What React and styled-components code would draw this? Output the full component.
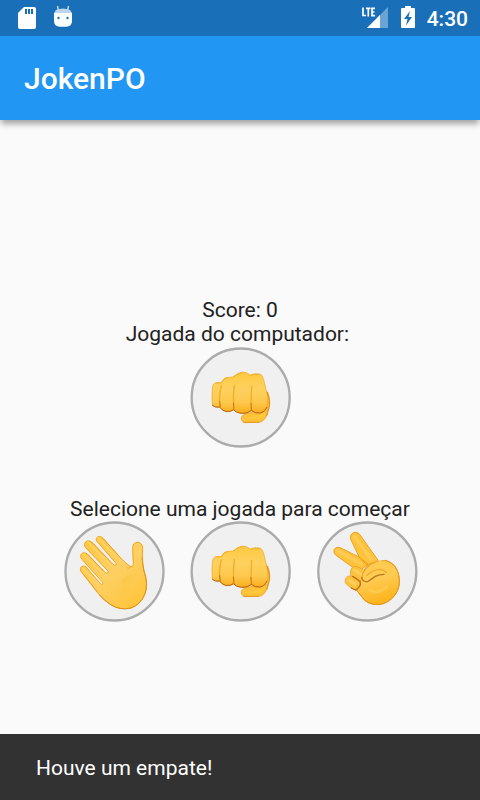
import React, { useState } from "react";
import styled, { createGlobalStyle } from "styled-components";

const GlobalStyle = createGlobalStyle`
  *, *::before, *::after { box-sizing: border-box; }
  body { margin: 0; background: #fafafa; }
`;

const Screen = styled.div`
  display: flex;
  flex-direction: column;
  min-height: 100vh;
  background: #fafafa;
  color: #212121;
  font-family: Roboto, "Liberation Sans", sans-serif;
  font-size: 21px;
  line-height: 24px;
`;

const StatusBar = styled.div`
  display: flex;
  align-items: center;
  justify-content: space-between;
  height: 36px;
  padding: 0 12px 0 15px;
  background: #1a70b8;
  color: #fff;
`;

const StatusGroup = styled.div`
  display: flex;
  align-items: center;
  gap: 12px;
`;

const StatusIcon = styled.svg`
  display: block;
  flex: none;
`;

const Clock = styled.time`
  padding-top: 2px;
  font-size: 21px;
  font-weight: 500;
`;

const AppBar = styled.header`
  display: flex;
  align-items: center;
  height: 84px;
  padding: 2px 24px 0;
  background: #2196f3;
  color: #fff;
  box-shadow: 0 5px 6px -1px rgba(0, 0, 0, 0.35);
`;

const Title = styled.h1`
  margin: 0;
  font-size: 30px;
  line-height: 36px;
  font-weight: 500;
`;

const Game = styled.main`
  flex: 1;
  display: flex;
  flex-direction: column;
  align-items: center;
  justify-content: center;
  gap: 49px;
`;

const Section = styled.section`
  display: flex;
  flex-direction: column;
  align-items: center;
`;

const Label = styled.p`
  margin: 0;
  white-space: pre;
`;

const Choices = styled.div`
  display: flex;
  gap: 25px;
  margin-top: -1px;
`;

const ChoiceButton = styled.button`
  display: block;
  padding: 0;
  border: 0;
  border-radius: 50%;
  background: none;
  cursor: pointer;
`;

const MoveArt = styled.svg`
  display: block;
  width: 102px;
  height: 102px;
  overflow: visible;
`;

const Snackbar = styled.div`
  position: fixed;
  right: 0;
  bottom: 0;
  left: 0;
  padding: 22px 36px 20px;
  background: #323232;
  color: #fff;
`;

function Disc({ cx }) {
  return <circle cx={cx} cy="169.5" r="147" fill="#f0f0f0" stroke="#ababab" strokeWidth="7" />;
}

function Paper() {
  return (
    <MoveArt viewBox="21 15 306 306" aria-hidden="true">
      <defs>
        <linearGradient id="paperSkin" x1="0" y1="0" x2="0.75" y2="1">
          <stop offset="0" stopColor="#ffc63a" />
          <stop offset="0.55" stopColor="#fdd064" />
          <stop offset="1" stopColor="#ffc53c" />
        </linearGradient>
      </defs>
      <Disc cx="178.5" />
      <path
        d="M77 168C73 156 83 149 93 156L137 207Q145 211 143 202L80 132C72 119 83 107 97 117L151 173Q161 178 159 168L92 98C82 85 96 70 111 82L173 147Q184 156 183 145L125 78C120 66 134 59 144 70L202 134Q223 155 231 155Q237 151 234 133L233 98C233 77 260 76 263 97L262 126Q263 150 267 168Q281 209 269 239Q256 269 228 279Q195 287 167 269Q142 253 129 235Z"
        fill="url(#paperSkin)"
        stroke="#f3a51b"
        strokeWidth="3"
        strokeLinejoin="round"
      />
      <path
        d="M199 196Q216 174 250 181Q228 184 225 204Q222 229 194 240Q211 216 199 196Z"
        fill="#fbc747"
        opacity="0.65"
      />
      <path d="M261 128Q263 150 267 168Q281 209 269 239Q256 269 228 279Q195 287 167 269Q147 256 134 240" fill="none" stroke="#d98a18" strokeWidth="2.5" />
      <path d="M231 155Q218 163 215 158M84 176L126 229" fill="none" stroke="#ef9b22" strokeWidth="2" strokeLinecap="round" />
      <path d="M129 67L195 138M98 80L174 157M85 118L151 182M82 159L139 214" fill="none" stroke="#ffd66a" strokeWidth="4" strokeLinecap="round" />
      <path d="M144 70L187 118M111 82L165 138M97 117L145 167" fill="none" stroke="#e89c20" strokeWidth="2" strokeLinecap="round" />
    </MoveArt>
  );
}

function Rock() {
  return (
    <MoveArt viewBox="27 15 306 306" aria-hidden="true">
      <defs>
        <linearGradient id="rockSkin" x1="0" y1="0" x2="0" y2="1">
          <stop offset="0" stopColor="#ffc93f" />
          <stop offset="0.4" stopColor="#fed15f" />
          <stop offset="0.72" stopColor="#fdc94e" />
          <stop offset="1" stopColor="#f9ad18" />
        </linearGradient>
      </defs>
      <Disc cx="182" />
      <path
        d="M238 158L263 153Q273 181 267 199L261 222Q251 243 238 244L194 245Q182 241 184 228Q187 220 202 218L228 211Z"
        fill="#ffc136"
        stroke="#ed991b"
        strokeWidth="2"
      />
      <path
        d="M97 142Q98 127 107 126L124 125Q130 110 144 109L159 108Q173 95 188 93Q199 93 211 102Q224 96 239 99Q247 101 251 116L261 157Q267 184 260 201Q254 214 239 216Q224 219 214 210Q203 220 181 217Q167 214 161 207Q153 213 139 212Q125 209 120 199Q107 200 97 193Q95 168 97 142Z"
        fill="url(#rockSkin)"
        stroke="#eea223"
        strokeWidth="2"
      />
      <path
        d="M97 193Q106 201 119 198Q125 208 137 211Q151 214 160 206Q169 216 185 217Q203 218 214 208Q225 218 241 216Q256 213 261 198"
        fill="none"
        stroke="#b96316"
        strokeWidth="3"
      />
      <path
        d="M124 135Q116 165 120 194M163 133Q158 166 162 202M215 136Q212 168 214 203"
        fill="none"
        stroke="#f4ad27"
        strokeWidth="4"
        strokeLinecap="round"
      />
      <path d="M119 181L121 197M160 186L162 205M213 187L214 207" fill="none" stroke="#c6781b" strokeWidth="3" strokeLinecap="round" />
      <path d="M106 126Q113 123 124 126Q130 113 143 110M159 108Q174 97 188 95M211 103Q228 98 239 101" fill="none" stroke="#f6b22e" strokeWidth="3" />
      <path d="M190 229Q214 231 237 225Q254 219 262 204Q256 230 238 234L192 235Z" fill="#ffc93e" />
      <path d="M261 153Q272 181 267 199L260 224" fill="none" stroke="#df8e1b" strokeWidth="3" />
      <path d="M191 244L236 244" stroke="#dd8a19" strokeWidth="2" strokeLinecap="round" />
    </MoveArt>
  );
}

function Scissors() {
  return (
    <MoveArt viewBox="24 15 306 306" aria-hidden="true">
      <defs>
        <linearGradient id="scissorsSkin" x1="0" y1="0" x2="0.3" y2="1">
          <stop offset="0" stopColor="#ffca4a" />
          <stop offset="0.5" stopColor="#fecb54" />
          <stop offset="1" stopColor="#fdb51e" />
        </linearGradient>
      </defs>
      <Disc cx="178" />
      <g strokeLinejoin="round" strokeLinecap="round">
        <path
          d="M130 77C119 59 140 44 154 57L211 137L177 150L156 130ZM133 156L84 121C71 109 80 92 97 98L151 125L180 147L159 165Z"
          fill="#ffc33a"
          stroke="#eda022"
          strokeWidth="3"
        />
        <path d="M140 65L189 132M90 108L160 146" fill="none" stroke="#fecb54" strokeWidth="10" />
        <path
          d="M178 152Q202 138 232 136Q258 142 268 167Q280 197 269 226Q256 255 226 266Q194 275 170 256L146 226L150 190L166 169Z"
          fill="url(#scissorsSkin)"
          stroke="#eaa023"
          strokeWidth="3"
        />
        <path
          d="M128 167C130 154 141 151 154 158L174 170L164 193L156 197Q133 188 128 180ZM112 194C114 181 127 180 139 187L158 199Q161 209 151 218L143 226Q120 215 112 204Z"
          fill="#ffc33b"
          stroke="#e09722"
          strokeWidth="2"
        />
        <path d="M139 166L160 178M122 195L142 207" fill="none" stroke="#fed064" strokeWidth="8" />
        <path d="M134 184Q148 191 156 200Q160 210 151 218L144 225Q137 223 130 219" fill="none" stroke="#c06d19" strokeWidth="4" />
        <path
          d="M208 138Q187 144 173 162Q161 177 161 188Q166 203 181 199Q192 191 202 185Q225 173 248 181Q266 168 232 140Z"
          fill="#ffcb50"
        />
        <path d="M208 139Q187 145 173 162Q161 177 161 188" fill="none" stroke="#e5a027" strokeWidth="3" />
        <path d="M161 187Q164 203 181 199Q192 191 202 184Q214 178 228 178" fill="none" stroke="#bb7620" strokeWidth="4" />
        <path d="M177 181Q192 165 216 163Q229 165 235 173" fill="none" stroke="#f0a92d" strokeWidth="4" />
        <path d="M233 137Q258 143 268 167Q280 197 269 226Q256 255 226 266Q194 275 170 256L148 228" fill="none" stroke="#e39a20" strokeWidth="3" />
        <path d="M184 225Q203 241 236 216" fill="none" stroke="#ffd260" strokeWidth="9" opacity="0.55" />
      </g>
    </MoveArt>
  );
}

const moves = [
  { name: "Papel", Art: Paper },
  { name: "Pedra", Art: Rock },
  { name: "Tesoura", Art: Scissors },
];

function SdCardIcon() {
  return (
    <StatusIcon width="24" height="36" viewBox="0 0 24 36" aria-hidden="true">
      <path fill="#fff" d="M9 7H19Q21 7 21 9V27Q21 29 19 29H5Q3 29 3 27V13Z" />
      <path fill="#1a70b8" d="M10 9h2v5h-2zM13 9h2v5h-2zM16 9h2v5h-2z" />
    </StatusIcon>
  );
}

function DroidIcon() {
  return (
    <StatusIcon width="24" height="36" viewBox="0 0 24 36" aria-hidden="true">
      <path d="M6.5 6L7.5 11M17.5 6L16.5 11" stroke="#d5e4f2" strokeWidth="1.3" />
      <path fill="#fff" d="M3 13H21V21Q21 26.700 15 26.700H9Q3 26.700 3 21Z" />
      <path fill="#bcd5ea" d="M5 10Q12 7 19 10L21 13H3Z" />
      <circle cx="7.500" cy="18" r="1.200" fill="#1a70b8" />
      <circle cx="16.500" cy="18" r="1.200" fill="#1a70b8" />
    </StatusIcon>
  );
}

function SignalIcon() {
  return (
    <StatusIcon width="28" height="36" viewBox="0 0 28 36" aria-hidden="true">
      <path fill="#6ba3d3" d="M27 7V28H6Z" />
      <path fill="#fff" d="M19 15V28H6Z" />
      <path fill="#1a70b8" d="M0 6H14V18H0Z" />
      <path d="M2 7.500V15.500H5M5 8.300H9.500M7.300 8V16.500M14 8.300H11V15.700H14M11 12H13.500" fill="none" stroke="#fff" strokeWidth="1.700" />
    </StatusIcon>
  );
}

function BatteryIcon() {
  return (
    <StatusIcon width="14" height="36" viewBox="0 0 14 36" aria-hidden="true">
      <path fill="#fff" d="M4 6H10V8H13Q14 8 14 9V27Q14 28 13 28H1Q0 28 0 27V9Q0 8 1 8H4Z" />
      <path fill="#1a70b8" d="M9 11L3 19H6.500L5 25.500L11 17H7.500Z" />
    </StatusIcon>
  );
}

export default function App() {
  const [message] = useState("Houve um empate!");
  return (
    <Screen>
      <GlobalStyle />
      <StatusBar>
        <StatusGroup>
          <SdCardIcon />
          <DroidIcon />
        </StatusGroup>
        <StatusGroup>
          <SignalIcon />
          <BatteryIcon />
          <Clock>4:30</Clock>
        </StatusGroup>
      </StatusBar>
      <AppBar>
        <Title>JokenPO</Title>
      </AppBar>
      <Game>
        <Section>
          <Label>Score: 0</Label>
          <Label>{"Jogada do computador: "}</Label>
          <Rock />
        </Section>
        <Section>
          <Label>Selecione uma jogada para começar</Label>
          <Choices>
            {moves.map(({ name, Art }) => (
              <ChoiceButton key={name} type="button" aria-label={name}>
                <Art />
              </ChoiceButton>
            ))}
          </Choices>
        </Section>
      </Game>
      <Snackbar role="status">{message}</Snackbar>
    </Screen>
  );
}
